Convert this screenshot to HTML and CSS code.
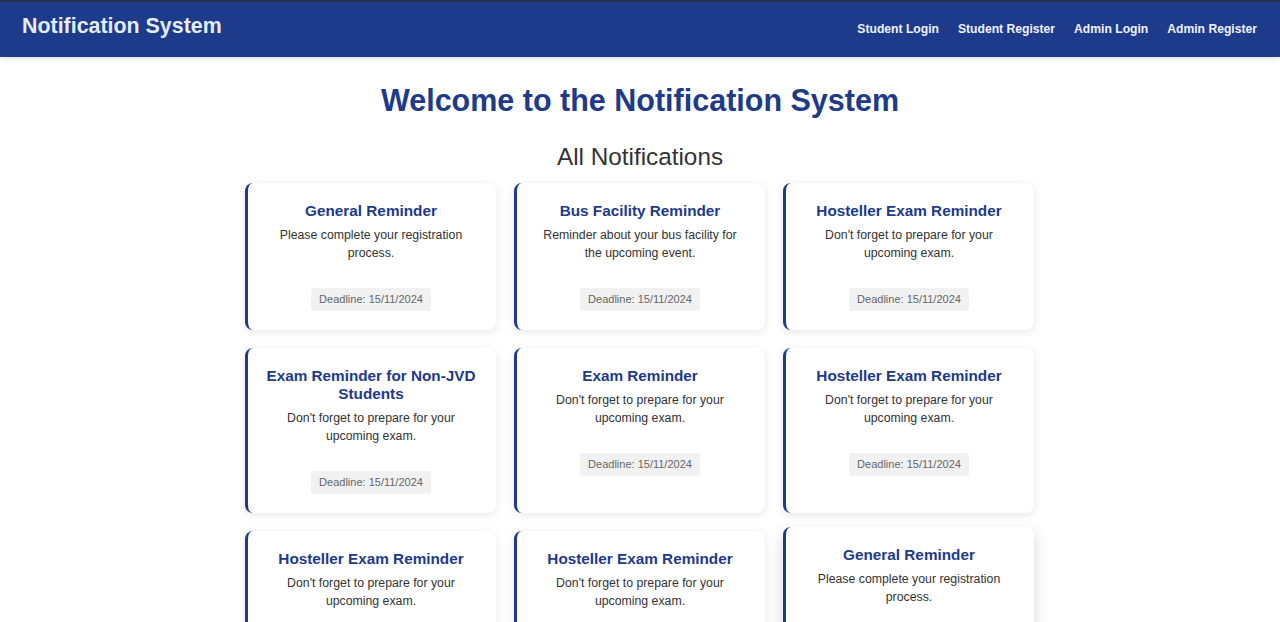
FILE: index.html
```html
<!DOCTYPE html>
<html lang="en">
<head>
<meta charset="utf-8">
<title>Notification System</title>
<link rel="stylesheet" href="styles.css">
</head>
<body>
<header class="topbar">
  <div class="logo">Notification System</div>
  <nav class="nav">
    <a href="#">Student Login</a>
    <a href="#">Student Register</a>
    <a href="#">Admin Login</a>
    <a href="#">Admin Register</a>
  </nav>
</header>
<main class="main">
  <h1 class="welcome">Welcome to the Notification System</h1>
  <h2 class="section-title">All Notifications</h2>
  <div class="grid">
    <div class="card">
      <h3>General Reminder</h3>
      <p>Please complete your registration process.</p>
      <span class="deadline">Deadline: 15/11/2024</span>
    </div>
    <div class="card">
      <h3>Bus Facility Reminder</h3>
      <p>Reminder about your bus facility for the upcoming event.</p>
      <span class="deadline">Deadline: 15/11/2024</span>
    </div>
    <div class="card">
      <h3>Hosteller Exam Reminder</h3>
      <p>Don't forget to prepare for your upcoming exam.</p>
      <span class="deadline">Deadline: 15/11/2024</span>
    </div>
    <div class="card">
      <h3>Exam Reminder for Non-JVD Students</h3>
      <p>Don't forget to prepare for your upcoming exam.</p>
      <span class="deadline">Deadline: 15/11/2024</span>
    </div>
    <div class="card">
      <h3>Exam Reminder</h3>
      <p>Don't forget to prepare for your upcoming exam.</p>
      <span class="deadline">Deadline: 15/11/2024</span>
    </div>
    <div class="card">
      <h3>Hosteller Exam Reminder</h3>
      <p>Don't forget to prepare for your upcoming exam.</p>
      <span class="deadline">Deadline: 15/11/2024</span>
    </div>
    <div class="card">
      <h3>Hosteller Exam Reminder</h3>
      <p>Don't forget to prepare for your upcoming exam.</p>
      <span class="deadline">Deadline: 15/11/2024</span>
    </div>
    <div class="card">
      <h3>Hosteller Exam Reminder</h3>
      <p>Don't forget to prepare for your upcoming exam.</p>
      <span class="deadline">Deadline: 15/11/2024</span>
    </div>
    <div class="card card-hover">
      <h3>General Reminder</h3>
      <p>Please complete your registration process.</p>
      <span class="deadline">Deadline: 15/11/2024</span>
    </div>
  </div>
</main>
</body>
</html>
```
FILE: styles.css
```css
* { box-sizing: border-box; }
html, body { margin: 0; padding: 0; }
body {
  font-family: "Liberation Sans", Arial, sans-serif;
  background: #ffffff;
  color: #333333;
}
.topbar {
  height: 57px;
  background: #1e3a8a;
  border-top: 2px solid #2a2f4e;
  display: flex;
  align-items: center;
  justify-content: space-between;
  padding: 0 23px 0 22px;
  box-shadow: 0 2px 6px rgba(0,0,0,0.12);
}
.logo {
  color: #e3edff;
  font-size: 21.4px;
  font-weight: bold;
  margin-bottom: 6px;
}
.nav {
  display: flex;
  gap: 19px;
  margin-bottom: 2px;
}
.nav a {
  color: #eef3ff;
  font-size: 12.15px;
  font-weight: bold;
  text-decoration: none;
}
.main {
  display: flex;
  flex-direction: column;
  align-items: center;
}
.welcome {
  margin: 26px 0 0;
  font-size: 30.5px;
  line-height: 34px;
  color: #1e3a8a;
  font-weight: bold;
}
.section-title {
  margin: 26px 0 0;
  font-size: 24.3px;
  line-height: 28px;
  font-weight: normal;
  color: #333333;
}
.grid {
  margin-top: 12px;
  display: grid;
  grid-template-columns: repeat(3, 251px);
  gap: 18px;
  margin-bottom: 30px;
  transform: translateX(-1px);
}
.card {
  background: #ffffff;
  border-left: 3px solid #1e3a8a;
  border-radius: 8px;
  box-shadow: 0 2px 8px rgba(0,0,0,0.1);
  padding: 19px 18px 19px 17px;
  text-align: center;
}
.card-hover {
  transform: translateY(-4px);
  box-shadow: 0 6px 16px rgba(0,0,0,0.16);
}
.card h3 {
  margin: 0 0 6px;
  font-size: 15.3px;
  line-height: 18px;
  color: #1e3a8a;
  font-weight: bold;
}
.card p {
  margin: 0;
  font-size: 12.3px;
  line-height: 18px;
  color: #333333;
}
.deadline {
  display: inline-block;
  margin-top: 26px;
  background: #f1f1f1;
  color: #666666;
  font-size: 11px;
  line-height: 13px;
  padding: 5px 8px;
  border-radius: 3px;
}
```
